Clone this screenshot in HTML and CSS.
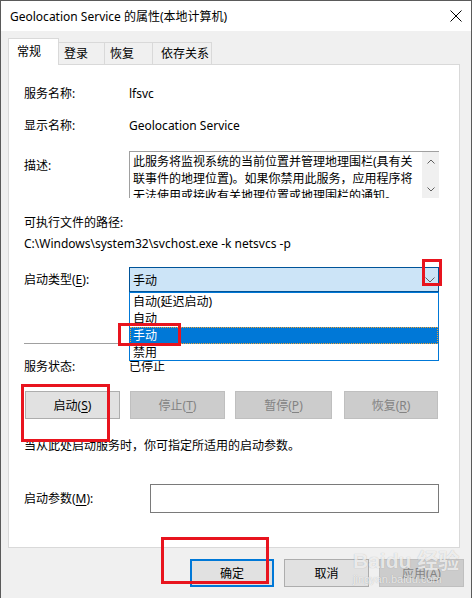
FILE: index.html
```html
<!DOCTYPE html>
<html lang="zh-CN">
<head>
  <meta charset="UTF-8">
  <title>Geolocation Service 的属性(本地计算机)</title>
  <link rel="stylesheet" href="styles.css">
</head>
<body>

  <div class="window">
    <div class="titlebar">
      <span>Geolocation Service 的属性(本地计算机)</span>
      <svg class="close" width="12" height="12" viewBox="0 0 12 12">
        <path d="M0.5 0.5 L11.5 11.5 M11.5 0.5 L0.5 11.5" stroke="#000" stroke-width="1" fill="none"/>
      </svg>
    </div>

    <div class="tabs">
      <div class="tab active">常规</div>
      <div class="tab">登录</div>
      <div class="tab">恢复</div>
      <div class="tab">依存关系</div>
    </div>

    <div class="panel">
      <div class="row row-name">
        <div class="label">服务名称:</div>
        <div class="value">lfsvc</div>
      </div>
      <div class="row row-display">
        <div class="label">显示名称:</div>
        <div class="value">Geolocation Service</div>
      </div>
      <div class="row row-desc">
        <div class="label label-top">描述:</div>
        <div class="desc-box">
          <div class="desc-text">此服务将监视系统的当前位置并管理地理围栏(具有关<br>联事件的地理位置)。如果你禁用此服务，应用程序将<br>无法使用或接收有关地理位置或地理围栏的通知。</div>
          <div class="scrollbar">
            <svg width="8" height="5" viewBox="0 0 8 5"><path d="M0.5 4.5 L4 1 L7.5 4.5" stroke="#606060" fill="none"/></svg>
            <svg width="8" height="5" viewBox="0 0 8 5"><path d="M0.5 0.5 L4 4 L7.5 0.5" stroke="#606060" fill="none"/></svg>
          </div>
        </div>
      </div>
      <div class="path-label">可执行文件的路径:</div>
      <div class="path-value">C:\Windows\system32\svchost.exe -k netsvcs -p</div>

      <div class="row row-type">
        <div class="label">启动类型(<u>E</u>):</div>
        <div class="combo">
          <span>手动</span>
          <svg width="10" height="6" viewBox="0 0 10 6"><path d="M0.5 0.5 L5 5 L9.5 0.5" stroke="#606060" fill="none"/></svg>
          <div class="dropdown">
            <div class="option">自动(延迟启动)</div>
            <div class="option">自动</div>
            <div class="option selected">手动</div>
            <div class="option">禁用</div>
          </div>
        </div>
      </div>

      <div class="separator"></div>

      <div class="row row-status">
        <div class="label">服务状态:</div>
        <div class="value">已停止</div>
      </div>

      <div class="actions">
        <button class="btn">启动(<u>S</u>)</button>
        <button class="btn disabled">停止(<u>T</u>)</button>
        <button class="btn disabled">暂停(<u>P</u>)</button>
        <button class="btn disabled">恢复(<u>R</u>)</button>
      </div>

      <div class="note">当从此处启动服务时，你可指定所适用的启动参数。</div>

      <div class="row row-params">
        <div class="label label-wide">启动参数(<u>M</u>):</div>
        <div class="params-input"></div>
      </div>
    </div>

    <div class="footer">
      <button class="btn default">确定</button>
      <button class="btn">取消</button>
      <button class="btn disabled">应用(<u>A</u>)</button>
    </div>

    <!-- 标注框 -->
    <div class="mark mark-chevron"></div>
    <div class="mark mark-manual"></div>
    <div class="mark mark-start"></div>
    <div class="mark mark-ok"></div>

    <div class="watermark">
      <div class="wm-big">Baidu 经验</div>
      <div class="wm-small">jingyan.baidu.com</div>
    </div>
  </div>

</body>
</html>
```

FILE: styles.css
```css
body {
  margin: 0;
  background-color: #3c3c3c;
  font-family: "Noto Sans", "Noto Sans CJK SC", sans-serif;
  font-size: 12px;
  color: #000;
}

u {
  text-decoration: underline;
  text-underline-offset: 2px;
}

.window {
  position: relative;
  width: 470px;
  height: 597px;
  background-color: #f0f0f0;
  border: 1px solid #5a5a5a;
  border-bottom: none;
  overflow: hidden;
}

.titlebar {
  height: 30px;
  background-color: #fff;
  display: flex;
  align-items: center;
  justify-content: space-between;
  padding: 0 9px 0 9px;
  font-size: 12px;
}

.tabs {
  display: flex;
  align-items: flex-end;
  margin-top: 7px;
  padding-left: 7px;
  height: 26px;
}

.tab {
  height: 22px;
  line-height: 22px;
  padding-left: 5px;
  box-sizing: border-box;
  white-space: nowrap;
  border: 1px solid #d9d9d9;
  border-bottom: none;
  border-left: none;
  background-color: #f0f0f0;
}

.tab:nth-child(2) { width: 46px; }
.tab:nth-child(3) { width: 48px; }
.tab:nth-child(4) { width: 59px; padding-left: 8px; }

.tab.active {
  height: 27px;
  line-height: 25px;
  width: 51px;
  padding-left: 8px;
  background-color: #fff;
  border-left: 1px solid #d9d9d9;
  margin-bottom: -1px;
  position: relative;
  z-index: 1;
}

.panel {
  margin-left: 7px;
  width: 452px;
  height: 484px;
  background-color: #fff;
  border: 1px solid #d9d9d9;
  padding: 0 20px 0 15px;
  box-sizing: border-box;
  display: flex;
  flex-direction: column;
}

.row {
  display: flex;
  align-items: center;
}

.label {
  width: 105px;
  flex-shrink: 0;
  line-height: 16px;
}

.value {
  line-height: 16px;
}

.label-top {
  align-self: flex-start;
  margin-top: 7px;
}

.row-name { margin-top: 21px; }
.row-display { margin-top: 16px; }
.row-desc { margin-top: 17px; align-items: stretch; }

.desc-box {
  flex: 1;
  height: 46px;
  border: 1px solid #a0a0a0;
  border-bottom: none;
  border-right: none;
  display: flex;
  overflow: hidden;
}

.desc-text {
  flex: 1;
  padding: 1px 0 0 3px;
  line-height: 17px;
  white-space: nowrap;
  overflow: hidden;
}

.scrollbar {
  width: 17px;
  flex-shrink: 0;
  background-color: #f0f0f0;
  display: flex;
  flex-direction: column;
  align-items: center;
  justify-content: space-between;
  padding: 7px 0 6px;
  box-sizing: border-box;
}

.path-label {
  margin-top: 17px;
  line-height: 16px;
}

.path-value {
  margin-top: 5px;
  line-height: 16px;
}

.row-type { margin-top: 15px; }

.combo {
  position: relative;
  flex: 1;
  height: 25px;
  background-color: #cce4f7;
  border: 1px solid #005499;
  box-sizing: border-box;
  display: flex;
  align-items: center;
  justify-content: space-between;
  padding: 0 3px 0 3px;
}

.dropdown {
  position: absolute;
  top: 24px;
  left: -1px;
  right: -1px;
  height: 69px;
  background-color: #fff;
  border: 1px solid #0078d7;
  box-sizing: border-box;
  z-index: 2;
}

.option {
  height: 17px;
  line-height: 17px;
  padding-left: 3px;
}

.option.selected {
  background-color: #0078d7;
  color: #fff;
  outline: 1px dotted #f0a030;
  outline-offset: -1px;
}

.separator {
  margin-top: 51px;
  height: 1px;
  background-color: #a0a0a0;
}

.row-status { margin-top: 15px; }

.actions {
  margin-top: 16px;
  margin-left: 1px;
  display: grid;
  grid-template-columns: 95px 95px 97px 96px;
  column-gap: 10px;
}

.btn {
  height: 28px;
  font-family: inherit;
  font-size: 12px;
  color: #000;
  background-color: #e1e1e1;
  border: 1px solid #adadad;
  padding: 0;
}

.btn.disabled {
  background-color: #cccccc;
  border-color: #bfbfbf;
  color: #838383;
}

.btn.default {
  border: 2px solid #0078d7;
}

.actions .btn:nth-child(4) { margin-left: 2px; }

.note {
  margin-top: 19px;
  line-height: 16px;
}

.row-params { margin-top: 30px; }

.label-wide { width: 126px; }

.params-input {
  flex: 1;
  height: 29px;
  border: 1px solid #7a7a7a;
  box-sizing: border-box;
}

.footer {
  display: flex;
  justify-content: flex-end;
  gap: 10px;
  margin-top: 11px;
  padding-right: 7px;
}

.footer .btn { width: 85px; }
.footer .btn.default { width: 84px; }

/* 红色标注框 */
.mark {
  position: absolute;
  border: 3px solid #e8141e;
  box-sizing: border-box;
  z-index: 5;
}

.mark-chevron { left: 421px; top: 258px; width: 20px; height: 27px; }
.mark-manual { left: 117px; top: 322px; width: 63px; height: 23px; }
.mark-start { left: 20px; top: 383px; width: 89px; height: 58px; }
.mark-ok { left: 160px; top: 536px; width: 108px; height: 47px; }

.watermark {
  position: absolute;
  left: 352px;
  top: 548px;
  color: rgba(255, 255, 255, 0.75);
  text-shadow: 0 0 1px rgba(0, 0, 0, 0.25);
  z-index: 4;
}

.wm-big {
  font-family: "Liberation Sans", "Noto Sans CJK SC", sans-serif;
  font-size: 21px;
  font-weight: bold;
  line-height: 24px;
}

.wm-small {
  font-family: "Liberation Sans", sans-serif;
  font-size: 11px;
  line-height: 13px;
}
```
